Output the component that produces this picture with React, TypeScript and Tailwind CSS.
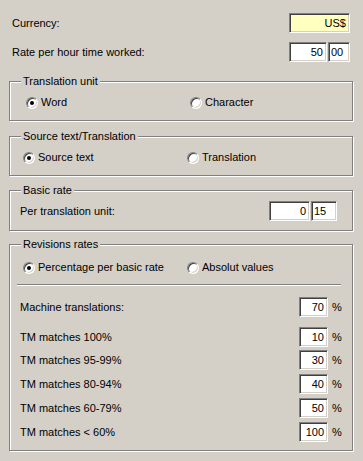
const sunken =
  'box-border h-[20px] border border-t-[#808080] border-l-[#808080] border-b-white border-r-white shadow-[inset_1px_1px_0_#404040,inset_-1px_-1px_0_#d4d0c8] leading-[18px]'

const groupBox =
  'ml-[9px] mr-[10px] border border-[#808080] shadow-[inset_1px_1px_0_#fff,1px_1px_0_#fff]'

const revisionRows = [
  { label: 'Machine translations:', value: '70', mt: 'mt-[11px]' },
  { label: 'TM matches 100%', value: '10', mt: 'mt-[10px]' },
  { label: 'TM matches 95-99%', value: '30', mt: 'mt-[3px]' },
  { label: 'TM matches 80-94%', value: '40', mt: 'mt-[4px]' },
  { label: 'TM matches 60-79%', value: '50', mt: 'mt-[4px]' },
  { label: 'TM matches < 60%', value: '100', mt: 'mt-[4px]' },
]

function Radio({ checked, label }: { checked?: boolean; label: string }) {
  return (
    <div className="flex items-center">
      <span className="box-border flex h-[12px] w-[12px] items-center justify-center rounded-full border border-t-[#808080] border-l-[#808080] border-b-white border-r-white bg-white shadow-[inset_1px_1px_0_#404040,inset_-1px_-1px_0_#d4d0c8]">
        {checked && <span className="h-[4px] w-[4px] rounded-full bg-black" />}
      </span>
      <span className="ml-[3px]">{label}</span>
    </div>
  )
}

function Field({ value, className, align = 'right' }: { value: string; className: string; align?: 'left' | 'right' }) {
  return (
    <div
      className={`${sunken} ${className} ${align === 'right' ? 'pr-[3px] text-right' : 'pl-[2px] text-left'}`}
    >
      {value}
    </div>
  )
}

function Title({ children }: { children: string }) {
  return <div className="-mt-[7px] ml-[11px] w-fit bg-[#d4d0c8] px-[2px] leading-[13px]">{children}</div>
}

export default function App() {
  return (
    <div
      className="box-border h-[461px] w-[363px] overflow-hidden bg-[#d4d0c8] pt-[13px] text-[11px] leading-[13px] text-black"
      style={{ fontFamily: '"Liberation Sans", Arial, sans-serif' }}
    >
      <div className="flex h-[20px] items-center justify-between pl-[12px] pr-[13px]">
        <span>Currency:</span>
        <Field value="US$" className="w-[61px] bg-[#ffffc0]" />
      </div>

      <div className="mt-[9px] flex h-[20px] items-center justify-between pl-[12px] pr-[13px]">
        <span>Rate per hour time worked:</span>
        <div className="flex gap-[1px]">
          <Field value="50" className="w-[38px] bg-white" />
          <Field value="00" className="w-[22px] bg-white" align="left" />
        </div>
      </div>

      <div className={`${groupBox} mt-[19px] pb-[11px]`}>
        <Title>Translation unit</Title>
        <div className="mt-[8px] flex h-[13px] items-center pl-[16px]">
          <div className="w-[164px]">
            <Radio checked label="Word" />
          </div>
          <Radio label="Character" />
        </div>
      </div>

      <div className={`${groupBox} mt-[15px] pb-[11px]`}>
        <Title>Source text/Translation</Title>
        <div className="mt-[8px] flex h-[13px] items-center pl-[13px]">
          <div className="w-[164px]">
            <Radio checked label="Source text" />
          </div>
          <Radio label="Translation" />
        </div>
      </div>

      <div className={`${groupBox} mt-[14px] pb-[9px]`}>
        <Title>Basic rate</Title>
        <div className="mt-[4px] flex h-[20px] items-center justify-between pl-[10px] pr-[15px]">
          <span>Per translation unit:</span>
          <div className="flex gap-[1px]">
            <Field value="0" className="w-[41px] bg-white" />
            <Field value="15" className="w-[26px] bg-white" align="left" />
          </div>
        </div>
      </div>

      <div className={`${groupBox} mt-[13px] pb-[8px]`}>
        <Title>Revisions rates</Title>
        <div className="mt-[10px] flex h-[13px] items-center pl-[13px]">
          <div className="w-[164px]">
            <Radio checked label="Percentage per basic rate" />
          </div>
          <Radio label="Absolut values" />
        </div>

        <div className="ml-[7px] mr-[11px] mt-[10px] h-[2px] border-t border-t-[#808080] border-b border-b-white" />

        {revisionRows.map((row) => (
          <div key={row.label} className={`${row.mt} flex h-[20px] items-center pl-[10px]`}>
            <span className="flex-1">{row.label}</span>
            <Field value={row.value} className="w-[29px] bg-white" />
            <span className="w-[24px] pl-[4px]">%</span>
          </div>
        ))}
      </div>
    </div>
  )
}
